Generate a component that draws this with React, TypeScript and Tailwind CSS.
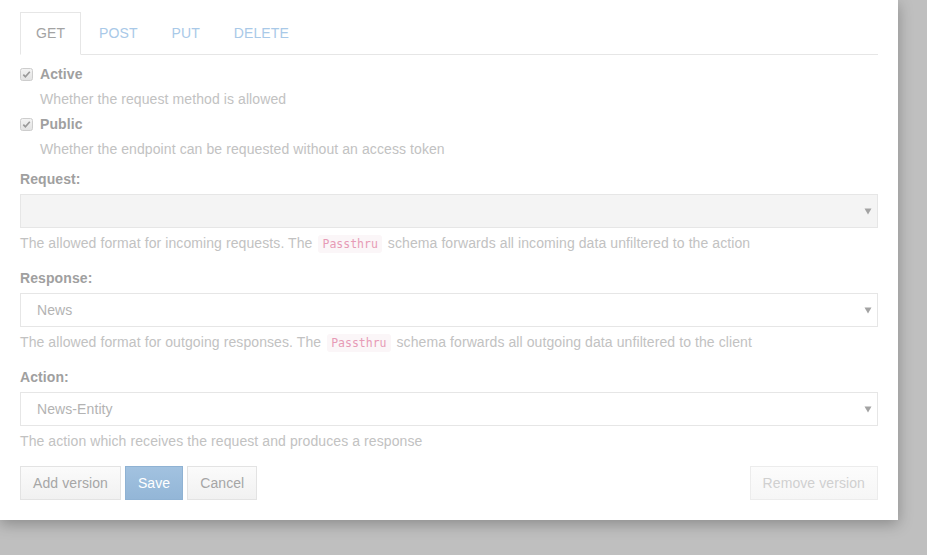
import React from "react";

const Check = () => (
  <svg width="13" height="13" viewBox="0 0 13 13" className="shrink-0">
    <defs>
      <linearGradient id="cb" x1="0" y1="0" x2="0" y2="1">
        <stop offset="0" stopColor="#f4f4f4" />
        <stop offset="1" stopColor="#e2e2e2" />
      </linearGradient>
    </defs>
    <rect x="0.5" y="0.5" width="12" height="12" rx="2" fill="url(#cb)" stroke="#cdcdcd" />
    <path d="M3.3 6.6 L5.4 8.8 L9.8 3.8" fill="none" stroke="#9a9a9a" strokeWidth="1.7" />
  </svg>
);

const Arrow = () => (
  <svg width="8" height="7" viewBox="0 0 8 7" className="absolute right-[5px] top-[13px]">
    <path d="M0.5 0.5 H7.5 L4 6.5 Z" fill="#a3a3a3" />
  </svg>
);

const Code = ({ children }: { children: React.ReactNode }) => (
  <code className="mx-[2px] rounded-[3px] bg-[#fbf6f8] px-[4px] py-[2px] text-[11.5px] leading-[1] tracking-normal text-[#e79bb6] [font-family:'DejaVu_Sans_Mono','Liberation_Mono',monospace]">
    {children}
  </code>
);

const Select = ({ value, disabled }: { value?: string; disabled?: boolean }) => (
  <div
    className={`relative h-[34px] w-full border border-[#e6e6e6] pl-4 text-[14px] leading-[32px] text-[#b3b3b3] ${
      disabled ? "bg-[#f4f4f4]" : "bg-white"
    }`}
  >
    {value}
    <Arrow />
  </div>
);

const Help = ({ children }: { children: React.ReactNode }) => (
  <div className="mt-[5px] text-[14px] leading-[20px] text-[#c2c2c2]">{children}</div>
);

const Label = ({ children }: { children: React.ReactNode }) => (
  <div className="mb-[5px] text-[14px] font-bold leading-[20px] text-[#a0a0a0]">{children}</div>
);

const Btn = ({ children, className = "" }: { children: React.ReactNode; className?: string }) => (
  <div
    className={`flex h-[34px] items-center justify-center border px-[12px] text-[14px] ${className}`}
  >
    {children}
  </div>
);

export default function App() {
  return (
    <div className="min-h-[555px] w-[927px] bg-[#bfbfbf] tracking-[0.09px] [font-family:'Liberation_Sans',Arial,sans-serif]">
      <div className="h-[520px] w-[898px] bg-white px-[20px] pt-[12px] shadow-[0_4px_14px_rgba(0,0,0,0.28)]">
        {/* Tabs */}
        <div className="flex border-b border-[#e6e6e6] text-[14px] leading-[20px]">
          <div className="-mb-px mr-[2px] border border-b-white border-[#e6e6e6] bg-white px-[15px] py-[10px] text-[#a3a3a3]">
            GET
          </div>
          <div className="mr-[2px] border border-transparent px-[15px] py-[10px] text-[#a9c9e8]">POST</div>
          <div className="mr-[2px] border border-transparent px-[15px] py-[10px] text-[#a9c9e8]">PUT</div>
          <div className="mr-[2px] border border-transparent px-[15px] py-[10px] text-[#a9c9e8]">DELETE</div>
        </div>

        {/* Checkboxes */}
        <div className="mt-[9px] flex items-center gap-[7px] text-[14px] leading-[20px]">
          <Check />
          <span className="font-bold text-[#a0a0a0]">Active</span>
        </div>
        <div className="mt-[5px] pl-[20px] text-[14px] leading-[20px] text-[#c2c2c2]">
          Whether the request method is allowed
        </div>
        <div className="mt-[5px] flex items-center gap-[7px] text-[14px] leading-[20px]">
          <Check />
          <span className="font-bold text-[#a0a0a0]">Public</span>
        </div>
        <div className="mt-[5px] pl-[20px] text-[14px] leading-[20px] text-[#c2c2c2]">
          Whether the endpoint can be requested without an access token
        </div>

        {/* Request */}
        <div className="mt-[10px]">
          <Label>Request:</Label>
          <Select disabled />
          <Help>
            The allowed format for incoming requests. The <Code>Passthru</Code> schema forwards all incoming data
            unfiltered to the action
          </Help>
        </div>

        <div className="mt-[15px]">
          <Label>Response:</Label>
          <Select value="News" />
          <Help>
            The allowed format for outgoing responses. The <Code>Passthru</Code> schema forwards all outgoing data
            unfiltered to the client
          </Help>
        </div>

        <div className="mt-[15px]">
          <Label>Action:</Label>
          <Select value="News-Entity" />
          <Help>The action which receives the request and produces a response</Help>
        </div>

        {/* Buttons */}
        <div className="mt-[15px] flex">
          <Btn className="border-[#e3e3e3] bg-gradient-to-b from-[#fbfbfb] to-[#f1f1f1] text-[#a6a6a6]">
            Add version
          </Btn>
          <Btn className="ml-[4px] border-[#8fb2d3] bg-gradient-to-b from-[#a2c2e0] to-[#93b6d7] text-white">
            Save
          </Btn>
          <Btn className="ml-[4px] border-[#e3e3e3] bg-gradient-to-b from-[#fbfbfb] to-[#f1f1f1] text-[#a6a6a6]">
            Cancel
          </Btn>
          <Btn className="ml-auto border-[#ececec] bg-gradient-to-b from-[#fcfcfc] to-[#f6f6f6] text-[#d0d0d0]">
            Remove version
          </Btn>
        </div>
      </div>
    </div>
  );
}
